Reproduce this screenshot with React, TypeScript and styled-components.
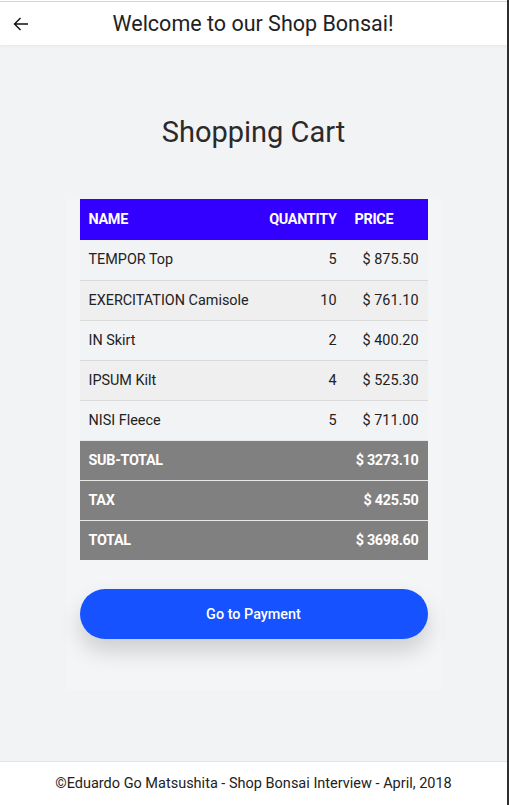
import React from "react";
import styled, { createGlobalStyle } from "styled-components";

const Global = createGlobalStyle`
  html, body { margin: 0; padding: 0; background: #2f2f2f; }
  body { font-family: Roboto, "Liberation Sans", Arial, sans-serif; }
  * { box-sizing: border-box; }
`;

const Page = styled.div`
  width: 507px;
  height: 805px;
  display: flex;
  flex-direction: column;
  background: #f2f3f5;
  border-top: 1px solid #fff;
`;

const Header = styled.header`
  height: 44px;
  flex: none;
  background: #fff;
  border-top: 1px solid #d6d6d6;
  box-shadow: 0 1px 3px rgba(0, 0, 0, 0.06);
  display: flex;
  align-items: center;
  position: relative;
  z-index: 1;
`;

const BackButton = styled.button`
  border: 0;
  background: transparent;
  padding: 0;
  width: 44px;
  height: 44px;
  display: flex;
  align-items: center;
  justify-content: center;
  margin-left: -1px;
  cursor: pointer;
`;

const HeaderTitle = styled.h2`
  flex: 1;
  margin: 0 44px 0 0;
  text-align: center;
  font-size: 21.5px;
  font-weight: 400;
  color: #222;
`;

const Main = styled.main`
  flex: 1;
  display: flex;
  flex-direction: column;
  align-items: center;
  padding-top: 70px;
`;

const Title = styled.h1`
  margin: 0 0 50px;
  font-size: 29px;
  line-height: 34px;
  font-weight: 400;
  color: #2a2a2a;
`;

const Panel = styled.section`
  width: 374px;
  padding: 0 13px 51px;
  background: #f4f5f7;
  display: flex;
  flex-direction: column;
`;

const Table = styled.table`
  width: 348px;
  border-collapse: collapse;
  font-size: 14.4px;
`;

const HeadCell = styled.th<{ $align?: string; $width?: number }>`
  background: #3300ff;
  color: #fff;
  font-weight: 700;
  height: 41px;
  width: ${(p) => (p.$width ? `${p.$width}px` : "auto")};
  text-align: ${(p) => p.$align || "left"};
  padding: 0 9px;
  letter-spacing: -0.3px;
`;

const Row = styled.tr<{ $alt?: boolean }>`
  background: ${(p) => (p.$alt ? "#efefef" : "#f2f3f5")};
  & + & { border-top: 1px solid #dadada; }
`;

const Cell = styled.td<{ $align?: string }>`
  height: 40px;
  padding: 0 9px;
  color: #222;
  text-align: ${(p) => p.$align || "left"};
  white-space: nowrap;
`;

const TotalRow = styled.tr`
  background: #808080;
  border-top: 1px solid #e8e8e8;
`;

const TotalCell = styled.td<{ $align?: string }>`
  height: 40px;
  padding: 0 9px;
  color: #fff;
  font-weight: 700;
  text-align: ${(p) => p.$align || "left"};
  letter-spacing: -0.3px;
`;

const PayButton = styled.button`
  margin-top: 29px;
  width: 348px;
  height: 50px;
  border: 0;
  border-radius: 25px;
  background: #1652ff;
  color: #fff;
  font-family: inherit;
  font-size: 14.4px;
  font-weight: 500;
  box-shadow: 0 12px 22px rgba(0, 0, 0, 0.16);
  cursor: pointer;
`;

const Footer = styled.footer`
  height: 44px;
  flex: none;
  background: #fff;
  border-top: 1px solid #e4e4e4;
  display: flex;
  align-items: center;
  justify-content: center;
  font-size: 14.5px;
  color: #222;
`;

const items = [
  { name: "TEMPOR Top", qty: 5, price: "875.50" },
  { name: "EXERCITATION Camisole", qty: 10, price: "761.10" },
  { name: "IN Skirt", qty: 2, price: "400.20" },
  { name: "IPSUM Kilt", qty: 4, price: "525.30" },
  { name: "NISI Fleece", qty: 5, price: "711.00" },
];

const totals = [
  { label: "SUB-TOTAL", value: "3273.10" },
  { label: "TAX", value: "425.50" },
  { label: "TOTAL", value: "3698.60" },
];

export default function App() {
  return (
    <>
      <Global />
      <Page>
        <Header>
          <BackButton aria-label="Back">
            <svg width="16" height="14" viewBox="0 0 16 14" fill="none">
              <path d="M15 7H1.5M7.5 1L1.5 7l6 6" stroke="#111" strokeWidth="1.4" />
            </svg>
          </BackButton>
          <HeaderTitle>Welcome to our Shop Bonsai!</HeaderTitle>
        </Header>
        <Main>
          <Title>Shopping Cart</Title>
          <Panel>
            <Table>
              <thead>
                <tr>
                  <HeadCell>NAME</HeadCell>
                  <HeadCell $align="right">QUANTITY</HeadCell>
                  <HeadCell $width={82}>PRICE</HeadCell>
                </tr>
              </thead>
              <tbody>
                {items.map((it, i) => (
                  <Row key={it.name} $alt={i % 2 === 1}>
                    <Cell>{it.name}</Cell>
                    <Cell $align="right">{it.qty}</Cell>
                    <Cell $align="right">$ {it.price}</Cell>
                  </Row>
                ))}
                {totals.map((t) => (
                  <TotalRow key={t.label}>
                    <TotalCell>{t.label}</TotalCell>
                    <TotalCell colSpan={2} $align="right">
                      $ {t.value}
                    </TotalCell>
                  </TotalRow>
                ))}
              </tbody>
            </Table>
            <PayButton>Go to Payment</PayButton>
          </Panel>
        </Main>
        <Footer>©Eduardo Go Matsushita - Shop Bonsai Interview - April, 2018</Footer>
      </Page>
    </>
  );
}
